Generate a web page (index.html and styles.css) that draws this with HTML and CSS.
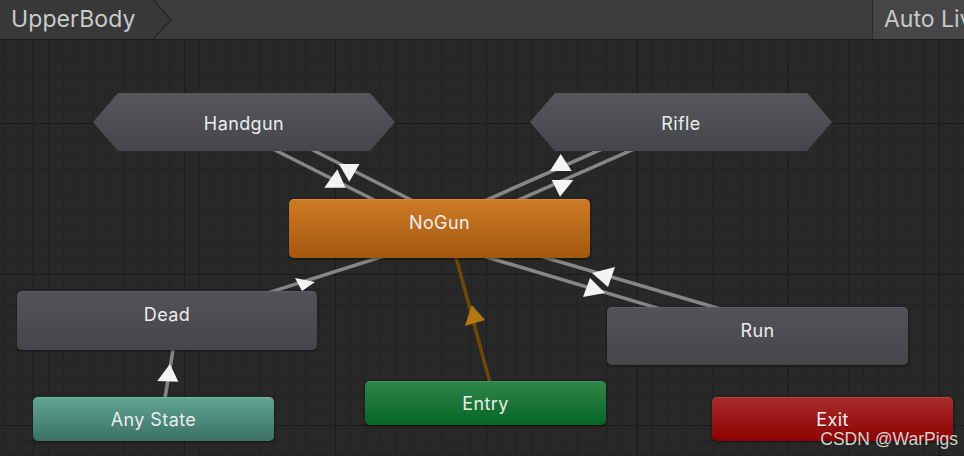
FILE: index.html
```html
<!DOCTYPE html>
<html lang="en">
<head>
<meta charset="utf-8">
<title>Animator - UpperBody</title>
<link rel="stylesheet" href="styles.css">
</head>
<body>
<div class="window">
  <header class="toolbar">
    <div class="crumb">
      <span class="crumb-label">UpperBody</span>
      <svg class="chevron" width="20" height="39" viewBox="0 0 20 39">
        <polygon points="0,0 1,0 19,19.5 1,39 0,39" fill="#383838"/>
        <polyline points="1,0 19,19.5 1,39" fill="none" stroke="#262626" stroke-width="1.4"/>
      </svg>
    </div>
    <div class="toolbar-fill"></div>
    <div class="live-link">Auto Live Link</div>
  </header>
  <main class="graph">
    <svg class="edges" width="964" height="416" viewBox="0 40 964 416">
      <g stroke="#868686" stroke-width="3.6" stroke-linecap="butt">
        <line x1="255" y1="140" x2="390" y2="208"/>
        <line x1="293" y1="140" x2="427" y2="208"/>
        <line x1="470" y1="207.3" x2="620" y2="141.2"/>
        <line x1="502" y1="207.3" x2="652" y2="141.2"/>
        <line x1="395" y1="252.6" x2="260" y2="295.4"/>
        <line x1="470" y1="252.1" x2="680" y2="314.9"/>
        <line x1="530" y1="253.1" x2="740" y2="314.7"/>
        <line x1="163" y1="410" x2="175" y2="338"/>
      </g>
      <line x1="454" y1="250" x2="492" y2="390" stroke="#6e4806" stroke-width="3.4"/>
      <g fill="#f4f4f4">
        <polygon points="337.3,169.3 324.3,187.7 345.5,187.7"/>
        <polygon points="339,164 359.5,164 349.3,181.7"/>
        <polygon points="560.7,154 550,171 571.7,171"/>
        <polygon points="551.7,180 573.3,180 560,196.7"/>
        <polygon points="295,278 315,282 302,291"/>
        <polygon points="592,273 615,267 608,287"/>
        <polygon points="583,297 590,278 605,293"/>
        <polygon points="170,364 157.3,381 178.3,381.7"/>
      </g>
      <polygon points="471.7,305 485,320 465,326" fill="#b47812"/>
    </svg>

    <div class="node hex" style="left:93px;top:53px"><span>Handgun</span></div>
    <div class="node hex" style="left:530px;top:53px"><span>Rifle</span></div>

    <div class="node big orange" style="left:289px;top:159px;width:301px;height:59px"><span>NoGun</span></div>
    <div class="node big gray" style="left:17px;top:251px;width:300px;height:59px"><span>Dead</span></div>
    <div class="node big gray" style="left:607px;top:267px;width:301px;height:58px"><span>Run</span></div>

    <div class="node small teal" style="left:33px;top:357px"><span>Any State</span></div>
    <div class="node small green" style="left:365px;top:341px"><span>Entry</span></div>
    <div class="node small red" style="left:712px;top:357px"><span>Exit</span></div>

    <div class="watermark">CSDN @WarPigs</div>
  </main>
</div>
</body>
</html>
```
FILE: styles.css
```css
* { box-sizing: border-box; }
html, body {
  margin: 0;
  padding: 0;
  width: 964px;
  height: 456px;
  overflow: hidden;
  background: #282828;
  font-family: Inter, "Noto Sans", "Liberation Sans", sans-serif;
}
.window {
  display: flex;
  flex-direction: column;
  width: 964px;
  height: 456px;
}
.toolbar {
  display: flex;
  align-items: stretch;
  height: 40px;
  flex: 0 0 40px;
  background: #3c3c3c;
  border-bottom: 1px solid #1d1d1d;
  overflow: hidden;
}
.crumb {
  display: flex;
  align-items: stretch;
  background: transparent;
}
.crumb-label {
  display: flex;
  align-items: center;
  width: 152px;
  padding-left: 11px;
  padding-bottom: 1px;
  background: #383838;
  color: #cbcbcb;
  font-size: 23px;
  letter-spacing: 0.1px;
}
.chevron { display: block; flex: 0 0 auto; }
.toolbar-fill {
  flex: 1;
}
.live-link {
  display: flex;
  align-items: center;
  width: 92px;
  flex: 0 0 92px;
  padding-left: 11px;
  padding-bottom: 1px;
  background: #464646;
  border-left: 1px solid #2a2a2a;
  color: #c8c8c8;
  font-size: 23px;
  white-space: nowrap;
  overflow: hidden;
}
.graph {
  position: relative;
  flex: 1;
  background-color: #282828;
  background-image:
    linear-gradient(90deg, #1b1b1b 1px, transparent 1px),
    linear-gradient(#1b1b1b 1px, transparent 1px),
    linear-gradient(90deg, #222222 1px, transparent 1px),
    linear-gradient(#222222 1px, transparent 1px);
  background-size: 151px 151px, 151px 151px, 15.1px 15.1px, 15.1px 15.1px;
  background-position: 33px 83px, 33px 83px, 2.8px 7.5px, 2.8px 7.5px;
  overflow: hidden;
}
.edges {
  position: absolute;
  left: 0;
  top: 0;
}
.node {
  position: absolute;
  display: flex;
  justify-content: center;
  color: #ececec;
  font-size: 18px;
  letter-spacing: 0.4px;
  border-radius: 5px;
  box-shadow: 0 1px 3px rgba(0, 0, 0, 0.55);
}
.node.hex {
  width: 302px;
  height: 58px;
  align-items: center;
  padding-top: 3px;
  background: linear-gradient(#55575b, #45464a);
  border-radius: 0;
  box-shadow: none;
  clip-path: polygon(0 50%, 25px 0, calc(100% - 25px) 0, 100% 50%, calc(100% - 25px) 100%, 25px 100%);
}
.node.big {
  align-items: flex-start;
  padding-top: 12px;
}
.node.small {
  width: 241px;
  height: 44px;
  align-items: center;
}
.gray {
  background: linear-gradient(#525358, #45464a);
  border-top: 1px solid #5c5d62;
}
.orange {
  background: linear-gradient(#cd7a25, #a4580f);
  border-top: 1px solid #d88a3a;
}
.teal {
  background: linear-gradient(#60a493, #3a7164);
  border-top: 1px solid #72b3a2;
}
.green {
  background: linear-gradient(#2f8646, #056528);
  border-top: 1px solid #3d9454;
}
.red {
  background: linear-gradient(#a92c2c, #8c0101);
  border-top: 1px solid #b64040;
}
.watermark {
  position: absolute;
  right: 6px;
  bottom: 6px;
  color: rgba(236, 236, 236, 0.88);
  font-family: "Liberation Sans", Arial, sans-serif;
  font-size: 17.5px;
  text-shadow: 0 0 1px rgba(0, 0, 0, 0.3);
}
```
